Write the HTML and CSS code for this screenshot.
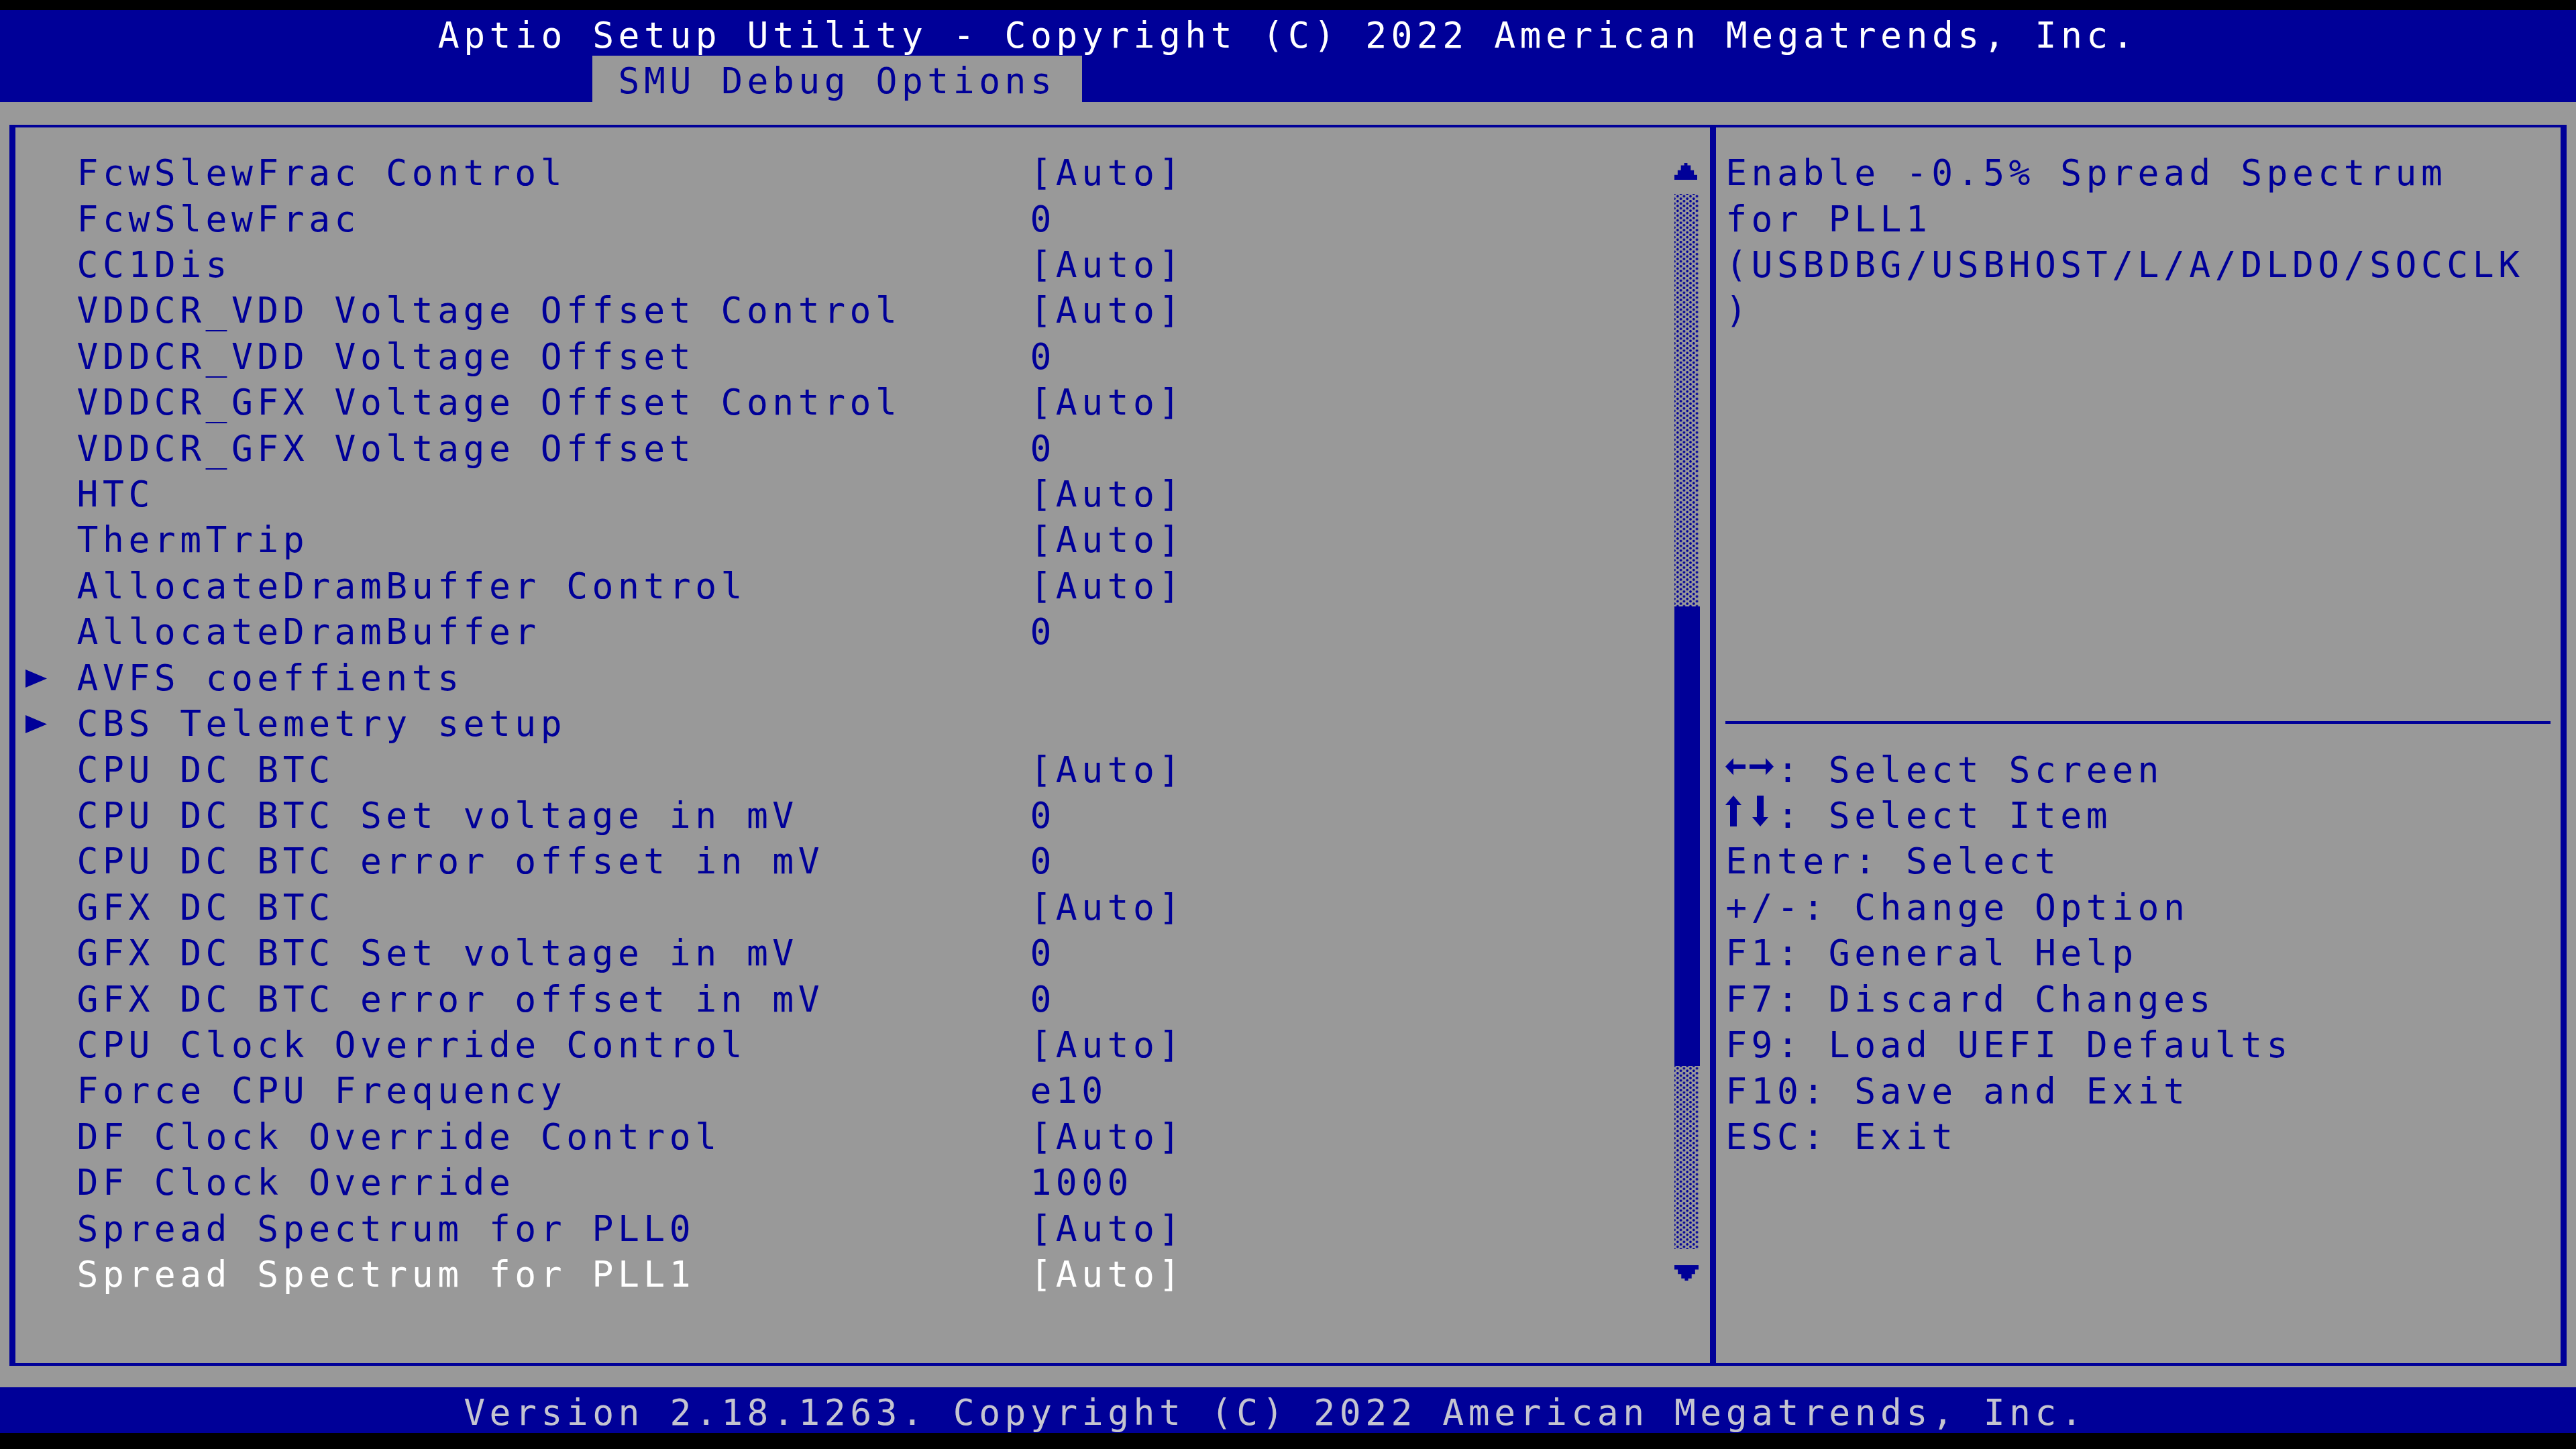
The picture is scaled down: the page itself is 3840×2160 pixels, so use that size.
FILE: index.html
```html
<!DOCTYPE html>
<html lang="en">
<head>
  <meta charset="UTF-8" />
  <title>Aptio Setup Utility - SMU Debug Options</title>
  <link rel="stylesheet" href="styles.css">
</head>
<body>
  <div class="screen">
    <div class="header">
      <div class="title ln">Aptio Setup Utility - Copyright (C) 2022 American Megatrends, Inc.</div>
      <div class="tabs">
        <span class="tab ln">SMU Debug Options</span>
      </div>
    </div>

    <div class="workspace">
      <div class="frame">
        <div class="menu">
          <ul class="items">
            <li class="ln"><span class="mark"></span><span class="label">FcwSlewFrac Control</span><span class="value">[Auto]</span></li>
            <li class="ln"><span class="mark"></span><span class="label">FcwSlewFrac</span><span class="value">0</span></li>
            <li class="ln"><span class="mark"></span><span class="label">CC1Dis</span><span class="value">[Auto]</span></li>
            <li class="ln"><span class="mark"></span><span class="label">VDDCR_VDD Voltage Offset Control</span><span class="value">[Auto]</span></li>
            <li class="ln"><span class="mark"></span><span class="label">VDDCR_VDD Voltage Offset</span><span class="value">0</span></li>
            <li class="ln"><span class="mark"></span><span class="label">VDDCR_GFX Voltage Offset Control</span><span class="value">[Auto]</span></li>
            <li class="ln"><span class="mark"></span><span class="label">VDDCR_GFX Voltage Offset</span><span class="value">0</span></li>
            <li class="ln"><span class="mark"></span><span class="label">HTC</span><span class="value">[Auto]</span></li>
            <li class="ln"><span class="mark"></span><span class="label">ThermTrip</span><span class="value">[Auto]</span></li>
            <li class="ln"><span class="mark"></span><span class="label">AllocateDramBuffer Control</span><span class="value">[Auto]</span></li>
            <li class="ln"><span class="mark"></span><span class="label">AllocateDramBuffer</span><span class="value">0</span></li>
            <li class="ln"><span class="mark"><svg width="32" height="27" viewBox="0 0 32 27"><polygon points="0,0 32,13.5 0,27"/></svg></span><span class="label">AVFS coeffients</span><span class="value"></span></li>
            <li class="ln"><span class="mark"><svg width="32" height="27" viewBox="0 0 32 27"><polygon points="0,0 32,13.5 0,27"/></svg></span><span class="label">CBS Telemetry setup</span><span class="value"></span></li>
            <li class="ln"><span class="mark"></span><span class="label">CPU DC BTC</span><span class="value">[Auto]</span></li>
            <li class="ln"><span class="mark"></span><span class="label">CPU DC BTC Set voltage in mV</span><span class="value">0</span></li>
            <li class="ln"><span class="mark"></span><span class="label">CPU DC BTC error offset in mV</span><span class="value">0</span></li>
            <li class="ln"><span class="mark"></span><span class="label">GFX DC BTC</span><span class="value">[Auto]</span></li>
            <li class="ln"><span class="mark"></span><span class="label">GFX DC BTC Set voltage in mV</span><span class="value">0</span></li>
            <li class="ln"><span class="mark"></span><span class="label">GFX DC BTC error offset in mV</span><span class="value">0</span></li>
            <li class="ln"><span class="mark"></span><span class="label">CPU Clock Override Control</span><span class="value">[Auto]</span></li>
            <li class="ln"><span class="mark"></span><span class="label">Force CPU Frequency</span><span class="value">e10</span></li>
            <li class="ln"><span class="mark"></span><span class="label">DF Clock Override Control</span><span class="value">[Auto]</span></li>
            <li class="ln"><span class="mark"></span><span class="label">DF Clock Override</span><span class="value">1000</span></li>
            <li class="ln"><span class="mark"></span><span class="label">Spread Spectrum for PLL0</span><span class="value">[Auto]</span></li>
            <li class="ln selected"><span class="mark"></span><span class="label">Spread Spectrum for PLL1</span><span class="value">[Auto]</span></li>
          </ul>

          <div class="scrollbar">
            <div class="sb-btn up">
              <svg width="34" height="25" viewBox="0 0 7 7" preserveAspectRatio="none"><path d="M3 0H4V1H5V3H6V5H7V7H0V5H1V3H2V1H3Z"/></svg>
            </div>
            <div class="sb-rail">
              <div class="sb-track" style="flex-grow: 9"></div>
              <div class="sb-thumb" style="flex-grow: 10"></div>
              <div class="sb-track" style="flex-grow: 4"></div>
            </div>
            <div class="sb-btn down">
              <svg width="36" height="23" viewBox="0 0 7 7" preserveAspectRatio="none"><path d="M0 0H7V2H6V4H5V6H4V7H3V6H2V4H1V2H0Z"/></svg>
            </div>
          </div>
        </div>

        <div class="help">
          <div class="help-text">
            <div class="ln">Enable -0.5% Spread Spectrum</div>
            <div class="ln">for PLL1</div>
            <div class="ln">(USBDBG/USBHOST/L/A/DLDO/SOCCLK</div>
            <div class="ln">)</div>
          </div>
          <div class="divider"></div>
          <ul class="keys">
            <li class="ln"><svg width="76.8" height="60.42" viewBox="0 8 76.8 60.42"><polygon points="0,32.7 12,20 12,45.4"/><rect x="11" y="29.5" width="19" height="6.5"/><rect x="36" y="29.5" width="25" height="6.5"/><polygon points="60,20 72,32.7 60,45.4"/></svg>: Select Screen</li>
            <li class="ln"><svg width="76.8" height="60.42" viewBox="0 8 76.8 60.42"><polygon points="12,8 0,22 24,22"/><rect x="7" y="21" width="10" height="33"/><rect x="47" y="8" width="10" height="33"/><polygon points="40,40 64,40 52,54"/></svg>: Select Item</li>
            <li class="ln">Enter: Select</li>
            <li class="ln">+/-: Change Option</li>
            <li class="ln">F1: General Help</li>
            <li class="ln">F7: Discard Changes</li>
            <li class="ln">F9: Load UEFI Defaults</li>
            <li class="ln">F10: Save and Exit</li>
            <li class="ln">ESC: Exit</li>
          </ul>
        </div>
      </div>
    </div>

    <div class="footer ln">Version 2.18.1263. Copyright (C) 2022 American Megatrends, Inc.</div>
  </div>
</body>
</html>
```

FILE: styles.css
```css
/* text-mode screen: 100 columns x 31 rows */
:root {
  --cw: 38.4px;
  --rh: 68.42px;
  --blue: #000098;
  --grey: #999999;
  --white: #ffffff;
  --dim: #c4c4d0;
}

* {
  box-sizing: border-box;
}

html, body {
  margin: 0;
  padding: 0;
  background: #000;
}

body {
  font-family: 'DejaVu Sans Mono', 'Liberation Mono', monospace;
  font-size: 53px;
  letter-spacing: 6.49px;
  color: var(--blue);
}

.screen {
  width: 3840px;
  height: 2160px;
  padding-top: 15px;
  overflow: hidden;
}

/* one character row */
.ln {
  height: var(--rh);
  padding-top: 8px;
  line-height: 60.42px;
  white-space: pre;
}

.header {
  background: var(--blue);
}

.title {
  padding-left: calc(17 * var(--cw));
  color: var(--white);
}

.tabs {
  height: var(--rh);
  padding-left: calc(23 * var(--cw));
}

.tab {
  display: block;
  width: calc(19 * var(--cw));
  padding-left: var(--cw);
  background: var(--grey);
  color: var(--blue);
}

.workspace {
  height: calc(28 * var(--rh));
  background: var(--grey);
  padding-top: 34.16px;
}

.frame {
  display: flex;
  width: 3811.2px;
  height: 1850px;
  margin-left: 14.4px;
  border: solid var(--blue);
  border-width: 4px 9.6px;
}

.menu {
  flex: none;
  display: flex;
  align-items: flex-start;
  width: 2534.4px;
  padding: 30.26px 14.4px 0;
  border-right: 9.6px solid var(--blue);
}

.items {
  flex: 1;
  margin: 0;
  padding: 0;
  list-style: none;
}

.items li {
  display: flex;
}

.items li.selected {
  color: var(--white);
}

.mark {
  flex: none;
  width: calc(2 * var(--cw));
}

.mark svg {
  display: block;
  margin-top: 17px;
  fill: var(--blue);
}

.label {
  flex: none;
  width: calc(37 * var(--cw));
}

.value {
  flex: 1;
}

.scrollbar {
  flex: none;
  display: flex;
  flex-direction: column;
  width: var(--cw);
  height: calc(25 * var(--rh));
}

.sb-btn {
  flex: none;
  height: var(--rh);
}

.sb-btn svg {
  display: block;
  fill: var(--blue);
}

.sb-btn.up svg {
  margin-top: 23px;
}

.sb-btn.down svg {
  margin-top: 24px;
}

.sb-rail {
  flex: 1;
  display: flex;
  flex-direction: column;
}

.sb-track {
  flex-basis: 0;
  width: 36px;
  background-image:
    radial-gradient(circle, var(--blue) 1.4px, transparent 2.2px),
    radial-gradient(circle, var(--blue) 1.4px, transparent 2.2px);
  background-size: 9.6px 7.2px;
  background-position: 0 0, 4.8px 3.6px;
}

.sb-thumb {
  flex-basis: 0;
  background: var(--blue);
}

.help {
  flex: 1;
  padding: 30.26px 14.4px 0;
}

.help-text {
  height: calc(12 * var(--rh));
}

/* rule sits in the middle of its row */
.divider {
  height: 38px;
  border-bottom: 4px solid var(--blue);
  margin-bottom: 30.42px;
}

.keys {
  margin: 0;
  padding: 0;
  list-style: none;
}

.keys li {
  display: flex;
}

.keys svg {
  flex: none;
  fill: var(--blue);
}

.footer {
  background: var(--blue);
  padding-left: calc(18 * var(--cw));
  color: var(--dim);
}
```
